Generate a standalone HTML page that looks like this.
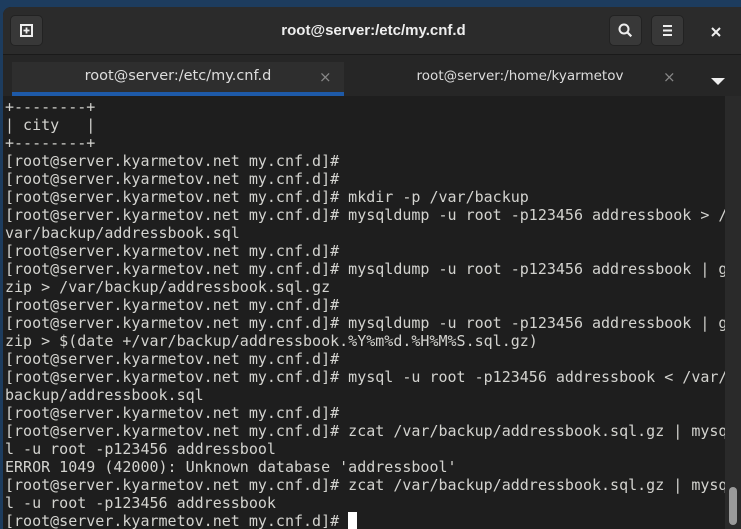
<!DOCTYPE html>
<html><head><meta charset="utf-8"><style>
html,body{margin:0;padding:0;width:741px;height:529px;overflow:hidden;background:#1d3c5e;}
.win{position:absolute;left:3px;top:7px;width:745px;height:522px;background:#1e1e1e;border-radius:8px 8px 0 0;overflow:hidden;}
.hdr{position:absolute;left:0;top:0;width:100%;height:47px;background:#2b2b2b;border-bottom:1px solid #1a1a1a;}
.btn{position:absolute;top:8px;width:33px;height:31px;background:#383838;border-radius:5px;border:1px solid #222;box-sizing:border-box;}
.title{position:absolute;left:0;width:741px;top:15px;text-align:center;color:#eee;font:bold 15px "Liberation Sans",sans-serif;}
.tabs{position:absolute;left:0;top:48px;width:100%;height:41px;background:#262626;}
.tab{position:absolute;top:7px;height:34px;color:#ddd;font:14.5px "DejaVu Sans","Liberation Sans",sans-serif;line-height:28px;text-align:center;}
.x{position:absolute;color:#888;font:15px "DejaVu Sans",sans-serif;}
.term{position:absolute;left:2px;top:91px;margin:0;color:#d3d3cf;font:15px/18px "DejaVu Sans Mono","Liberation Mono",monospace;white-space:pre;}
.sb{position:absolute;left:722px;top:89px;width:16px;height:440px;background:#2a2a2a;}
.thumb{position:absolute;left:4px;top:391px;width:8px;height:38px;background:#9a9a9a;border-radius:4px;}
.cur{display:inline-block;width:9px;height:17px;background:#fff;vertical-align:-3px;}
</style></head><body>
<div class="win">
 <div class="hdr">
  <div class="btn" style="left:7px;"><svg width="33" height="31" viewBox="0 0 33 31" style="position:absolute;left:-1px;top:-1px"><rect x="11" y="10" width="11" height="11" fill="none" stroke="#eee" stroke-width="2"/><path d="M16.5 12.5v6M13.5 15.5h6" stroke="#eee" stroke-width="1.8"/><rect x="10" y="20" width="13" height="2" fill="#eee"/></svg></div>
  <div class="title">root@server:/etc/my.cnf.d</div>
  <div class="btn" style="left:606px;"><svg width="33" height="31" style="position:absolute;left:-1px;top:-1px"><circle cx="15" cy="14" r="4.5" fill="none" stroke="#eee" stroke-width="2"/><path d="M18.3 17.3l4 4" stroke="#eee" stroke-width="2.2"/></svg></div>
  <div class="btn" style="left:648px;"><svg width="33" height="31" style="position:absolute;left:-1px;top:-1px"><path d="M12 11h9M12 15.5h9M12 20h9" stroke="#eee" stroke-width="2"/></svg></div>
  <svg width="12" height="12" style="position:absolute;left:707px;top:19px"><path d="M2 2l8 8M10 2l-8 8" stroke="#eee" stroke-width="2"/></svg>
 </div>
 <div class="tabs">
  <div class="tab" style="left:9px;width:332px;background:#2e2e2e;border-bottom:4px solid #1e5aa8;box-sizing:border-box;height:34px;">root@server:/etc/my.cnf.d</div>
  <div class="x" style="left:316px;top:13px;">×</div>
  <div class="tab" style="left:351px;width:332px;font-size:13.5px;">root@server:/home/kyarmetov</div>
  <div class="x" style="left:660px;top:13px;">×</div>
  <svg width="14" height="8" style="position:absolute;left:708px;top:23px"><path d="M0 0h14L7 7z" fill="#eee"/></svg>
 </div>
 <pre class="term">+--------+
| city   |
+--------+
[root@server.kyarmetov.net my.cnf.d]#
[root@server.kyarmetov.net my.cnf.d]#
[root@server.kyarmetov.net my.cnf.d]# mkdir -p /var/backup
[root@server.kyarmetov.net my.cnf.d]# mysqldump -u root -p123456 addressbook > /
var/backup/addressbook.sql
[root@server.kyarmetov.net my.cnf.d]#
[root@server.kyarmetov.net my.cnf.d]# mysqldump -u root -p123456 addressbook | g
zip > /var/backup/addressbook.sql.gz
[root@server.kyarmetov.net my.cnf.d]#
[root@server.kyarmetov.net my.cnf.d]# mysqldump -u root -p123456 addressbook | g
zip > $(date +/var/backup/addressbook.%Y%m%d.%H%M%S.sql.gz)
[root@server.kyarmetov.net my.cnf.d]#
[root@server.kyarmetov.net my.cnf.d]# mysql -u root -p123456 addressbook &lt; /var/
backup/addressbook.sql
[root@server.kyarmetov.net my.cnf.d]#
[root@server.kyarmetov.net my.cnf.d]# zcat /var/backup/addressbook.sql.gz | mysq
l -u root -p123456 addressbool
ERROR 1049 (42000): Unknown database 'addressbool'
[root@server.kyarmetov.net my.cnf.d]# zcat /var/backup/addressbook.sql.gz | mysq
l -u root -p123456 addressbook
[root@server.kyarmetov.net my.cnf.d]# <span class="cur"></span></pre>
 <div class="sb"><div class="thumb"></div></div>
</div>
</body></html>
